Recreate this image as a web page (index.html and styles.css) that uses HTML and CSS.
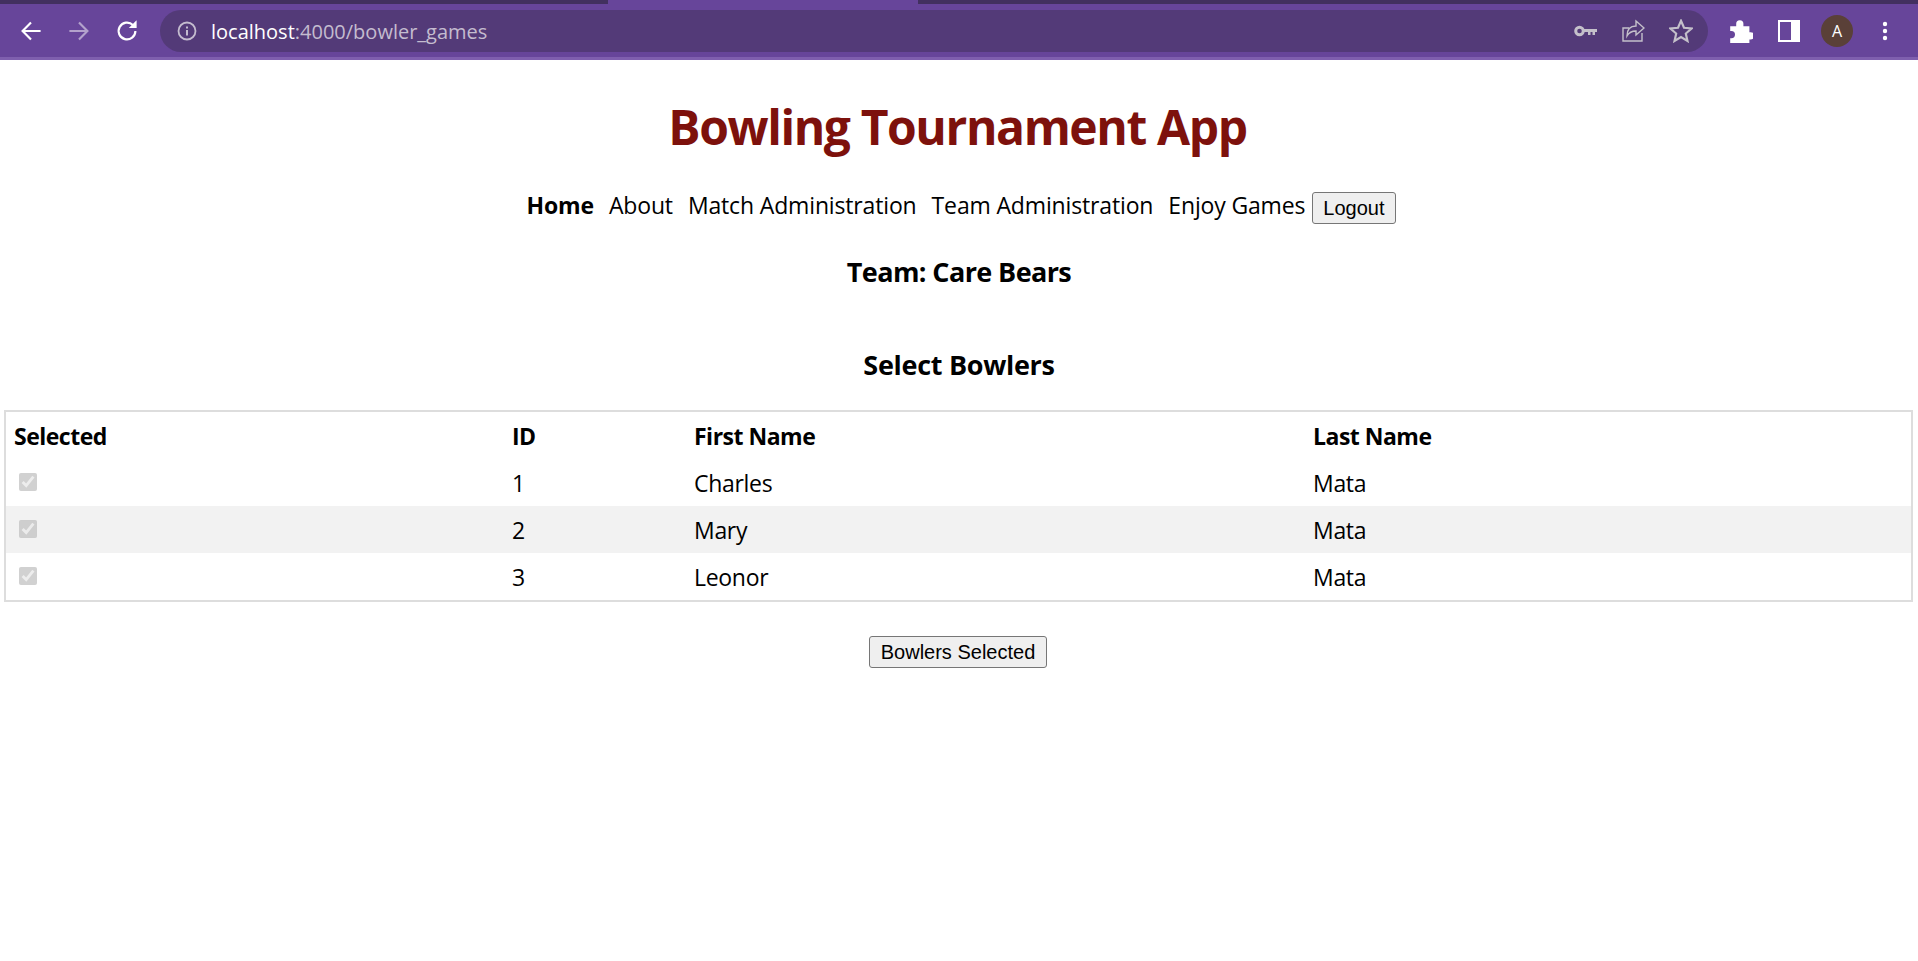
FILE: index.html
```html
<!DOCTYPE html>
<html lang="en">

<head>
  <meta charset="UTF-8">
  <title>Bowling Tournament App</title>
  <link rel="stylesheet" href="styles.css">
</head>

<body>
  <div class="tabstrip">
    <div class="tab"></div>
  </div>
  <div class="toolbar">
    <svg class="tool" viewBox="2 2 20 20"><path d="M20 12H5M12 5l-7 7 7 7" fill="none" stroke="#fff" stroke-width="1.800"/></svg>
    <svg class="tool dim" viewBox="2 2 20 20"><path d="M4 12h15M12 5l7 7-7 7" fill="none" stroke="#fff" stroke-width="1.800"/></svg>
    <svg class="tool" viewBox="2 2 20 20"><path d="M19 12a7 7 0 1 1-2.100-5" fill="none" stroke="#fff" stroke-width="1.800"/><path d="M20 3v6.500h-6.500z" fill="#fff"/></svg>
    <div class="omnibox">
      <svg class="info" viewBox="0 0 20 20"><circle cx="10" cy="10" r="8.500" fill="none" stroke="#c4bccf" stroke-width="1.800"/><path d="M10 9v5.500M10 5.500v2" stroke="#c4bccf" stroke-width="2"/></svg>
      <span class="url"><span class="host">localhost</span>:4000/bowler_games</span>
      <svg class="omni-icon" viewBox="0 0 24 24"><circle cx="6.500" cy="12" r="3.800" fill="none" stroke="#c4c0ca" stroke-width="3"/><path d="M10 10h14v3h-2v3h-2.500v-3h-2v3H15v-3h-5z" fill="#c4c0ca"/></svg>
      <svg class="omni-icon" viewBox="0 0 24 24"><path d="M21 14v8H2V9h6" fill="none" stroke="#c4c0ca" stroke-width="1.400"/><path d="M15 2l8 7-8 7v-4c-4 0-7 1.500-9 5 0-6 3-10 9-10z" fill="none" stroke="#c4c0ca" stroke-width="1.400"/></svg>
      <svg class="omni-icon" viewBox="2 2 20 20"><path d="M12 3.500l2.500 5.800 6.300.6-4.800 4.200 1.400 6.200L12 17l-5.400 3.300 1.400-6.200-4.800-4.200 6.300-.6z" fill="none" stroke="#c4c0ca" stroke-width="1.800"/></svg>
    </div>
    <svg class="tool ext" viewBox="2 1 20 20"><path d="M3 7h5V5a3 3 0 0 1 6 0v2h5v5h1a3 3 0 0 1 0 6h-1v3H3v-4h1a3 3 0 0 0 0-6H3z" fill="#fff"/></svg>
    <svg class="tool side" viewBox="0 0 24 24"><rect x="1" y="1" width="22" height="22" fill="#fff"/><rect x="3" y="3" width="11" height="18" fill="#67459a"/></svg>
    <div class="avatar">A</div>
    <svg class="tool more" viewBox="0 0 24 24"><circle cx="12" cy="5" r="2.200" fill="#fff"/><circle cx="12" cy="12" r="2.200" fill="#fff"/><circle cx="12" cy="19" r="2.200" fill="#fff"/></svg>
  </div>

  <h1 class="title">Bowling Tournament App</h1>

  <nav class="nav">
    <a class="nav-link active" href="#">Home</a>
    <a class="nav-link" href="#">About</a>
    <a class="nav-link" href="#">Match Administration</a>
    <a class="nav-link" href="#">Team Administration</a>
    <a class="nav-link" href="#">Enjoy Games</a>
    <button class="btn" type="button">Logout</button>
  </nav>

  <h3 class="team">Team: Care Bears</h3>
  <h3 class="select-title">Select Bowlers</h3>

  <table class="bowlers">
    <tr>
      <th class="col-sel">Selected</th>
      <th class="col-id">ID</th>
      <th class="col-first">First Name</th>
      <th>Last Name</th>
    </tr>
    <tr>
      <td><input type="checkbox" checked disabled></td>
      <td>1</td>
      <td>Charles</td>
      <td>Mata</td>
    </tr>
    <tr>
      <td><input type="checkbox" checked disabled></td>
      <td>2</td>
      <td>Mary</td>
      <td>Mata</td>
    </tr>
    <tr>
      <td><input type="checkbox" checked disabled></td>
      <td>3</td>
      <td>Leonor</td>
      <td>Mata</td>
    </tr>
  </table>

  <div class="actions">
    <button class="btn" type="button">Bowlers Selected</button>
  </div>
</body>

</html>
```
FILE: styles.css
```css
body {
  font-family: "Open Sans", "Noto Sans", sans-serif;
  background-color: #fff;
  color: #000;
  margin: 0;
}

.tabstrip {
  height: 4px;
  background-color: #42305f;
  padding-left: 608px;
}

.tab {
  width: 310px;
  height: 4px;
  background-color: #67459a;
}

.toolbar {
  height: 52px;
  padding-top: 1px;
  background-color: #67459a;
  border-bottom: 3px solid #7f5fae;
  display: flex;
  align-items: center;
  padding-left: 19px;
}

.tool {
  width: 24px;
  height: 24px;
  margin-right: 24px;
  flex: none;
}

.tool.dim {
  opacity: 0.5;
}

.tool.ext {
  margin-right: 24px;
}

.tool.side {
  margin-right: 20px;
}

.omnibox {
  width: 1548px;
  height: 42px;
  margin-left: -3px;
  margin-right: 21px;
  border-radius: 21px;
  background-color: #533a78;
  display: flex;
  align-items: center;
  padding-left: 17px;
  box-sizing: border-box;
  flex: none;
}

.info {
  width: 20px;
  height: 20px;
  margin-right: 14px;
}

.url {
  font-size: 20px;
  color: #c4bccf;
  flex: 1;
}

.host {
  color: #fff;
}

.omni-icon {
  width: 24px;
  height: 24px;
  margin-right: 24px;
}

.omni-icon:last-child {
  margin-right: 15px;
}

.avatar {
  width: 32px;
  height: 32px;
  border-radius: 50%;
  background-color: #5a4038;
  color: #fff;
  font-size: 16px;
  line-height: 32px;
  text-align: center;
  margin-right: 20px;
  flex: none;
}

.title {
  font-size: 48px;
  font-weight: 700;
  letter-spacing: -1.4px;
  color: #7d110c;
  text-align: center;
  margin: 32px 3px 0 0;
  line-height: 70px;
}

.nav {
  display: flex;
  justify-content: center;
  align-items: center;
  margin-top: 25px;
  padding-left: 4px;
  height: 36px;
}

.nav-link {
  color: #000;
  text-decoration: none;
  font-size: 23px;
  letter-spacing: -0.15px;
  margin-right: 15px;
}

.nav-link:nth-child(5) {
  margin-right: 7px;
}

.nav-link.active {
  font-weight: 700;
}

.btn {
  font-family: "Liberation Sans", Arial, sans-serif;
  font-size: 20px;
  height: 32px;
  padding: 0 10px;
  background-color: #efefef;
  border: 1px solid #767676;
  border-radius: 3px;
  color: #000;
}

.nav .btn {
  margin-top: 6px;
}

.team,
.select-title {
  font-size: 27px;
  font-weight: 700;
  text-align: center;
  line-height: 38px;
  margin: 0;
}

.team {
  letter-spacing: -0.6px;
  margin-top: 30px;
}

.select-title {
  letter-spacing: -0.3px;
  margin-top: 55px;
}

.bowlers {
  width: 1909px;
  margin: 26px 5px 0 4px;
  border: 2px solid #ddd;
  border-collapse: collapse;
  table-layout: fixed;
  font-size: 23px;
  letter-spacing: -0.3px;
}

.bowlers th,
.bowlers td {
  height: 47px;
  padding: 0 7px 0 8px;
  text-align: left;
}

.bowlers th {
  font-weight: 700;
  letter-spacing: -0.5px;
}

.bowlers tr:nth-child(3) {
  background-color: #f2f2f2;
}

.bowlers input {
  width: 18px;
  height: 18px;
  margin: 0 0 0 5px;
  vertical-align: 1px;
}

.col-sel {
  width: 483px;
}

.col-id {
  width: 167px;
}

.col-first {
  width: 604px;
}

.actions {
  text-align: center;
  margin-top: 34px;
}

.actions .btn {
  padding: 0 11px;
  margin-right: 2px;
}
```
